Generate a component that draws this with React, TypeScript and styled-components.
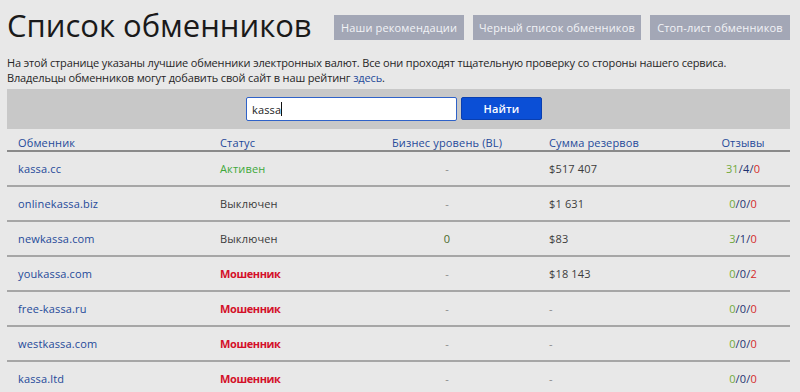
import React from "react";
import styled, { createGlobalStyle, css } from "styled-components";

const Global = createGlobalStyle`
  html, body { margin: 0; padding: 0; background: #e8e8e8; }
  body { font-family: "Open Sans", "Noto Sans", sans-serif; color: #333; }
  * { box-sizing: border-box; }
`;

const small = css`
  font-size: 11px;
  letter-spacing: 0.15px;
`;

const Page = styled.div`
  width: 800px;
  height: 392px;
  overflow: hidden;
  padding: 0 10px 0 7px;
  background: #e8e8e8;
`;

const TopBar = styled.div`
  display: flex;
  align-items: center;
  height: 55px;
`;

const Title = styled.h1`
  align-self: flex-start;
  margin: 9px 0 0 0;
  font-size: 31px;
  letter-spacing: 0;
  line-height: 32px;
  font-weight: 400;
  color: #1a1a1a;
  flex: 1;
`;

const NavButtons = styled.div`
  display: flex;
  gap: 9px;
`;

const NavButton = styled.button<{ $w: number }>`
  ${small};
  width: ${(p) => p.$w}px;
  height: 25px;
  border: none;
  background: #a3a7b6;
  color: #f2f3f6;
  font-family: inherit;
  padding: 0;
`;

const Intro = styled.p`
  ${small};
  letter-spacing: -0.15px;
  margin: 0;
  line-height: 15px;
  color: #262626;
`;

const Link = styled.a`
  color: #1f4a9a;
  text-decoration: none;
`;

const SearchBand = styled.div`
  margin-top: 4px;
  height: 40px;
  background: #c8c8c8;
  display: flex;
  align-items: center;
  justify-content: center;
  gap: 4px;
  padding-right: 9px;
`;

const SearchInput = styled.div`
  ${small};
  width: 211px;
  height: 24px;
  background: #fff;
  border: 1px solid #2f62c8;
  border-radius: 2px;
  padding-left: 5px;
  color: #222;
  display: flex;
  align-items: center;
`;

const Caret = styled.span`
  display: inline-block;
  width: 1px;
  height: 14px;
  background: #111;
`;

const FindButton = styled.button`
  ${small};
  width: 81px;
  height: 23px;
  margin-top: -1px;
  border: 1px solid #0a3fb0;
  border-radius: 2px;
  background: #0b4fd6;
  color: #fff;
  font-family: inherit;
  font-weight: 600;
  padding: 0;
`;

const Table = styled.div`
  display: grid;
  grid-template-columns: 213px 125px 204px 147px 94px;
`;

const Row = styled.div`
  display: contents;
`;

const Cell = styled.div<{ $head?: boolean; $center?: boolean; $first?: boolean }>`
  ${small};
  height: ${(p) => (p.$head ? 23 : 35)}px;
  padding-top: ${(p) => (p.$head ? 6 : 0)}px;
  padding-left: ${(p) => (p.$first ? 11 : 0)}px;
  display: flex;
  align-items: ${(p) => (p.$head ? "flex-start" : "center")};
  justify-content: ${(p) => (p.$center ? "center" : "flex-start")};
  border-bottom: 2px solid ${(p) => (p.$head ? "#8a8a8a" : "#a6a6a6")};
  line-height: 16px;
  color: ${(p) => (p.$head ? "#1f4a9a" : "#3c3c3c")};
  white-space: nowrap;
`;

const Name = styled.span`
  color: #1f4a9a;
`;

const Status = styled.span<{ $kind: "active" | "off" | "fraud" }>`
  color: ${(p) =>
    p.$kind === "active" ? "#3ea83a" : p.$kind === "fraud" ? "#d4102a" : "#3a3a3a"};
  font-weight: ${(p) => (p.$kind === "fraud" ? 700 : 400)};
  letter-spacing: ${(p) => (p.$kind === "fraud" ? "-0.4px" : "0.15px")};
`;

const Muted = styled.span`
  color: #8a8a8a;
`;

const Level = styled.span`
  color: #4a6a2a;
`;

const Plus = styled.span`
  color: #72a83c;
`;
const Mid = styled.span`
  color: #1f3370;
`;
const Minus = styled.span`
  color: #d42a2a;
`;

type Rec = {
  name: string;
  status: "active" | "off" | "fraud";
  bl: string;
  reserve: string;
  rev: [string, string, string];
};

const data: Rec[] = [
  { name: "kassa.cc", status: "active", bl: "-", reserve: "$517 407", rev: ["31", "4", "0"] },
  { name: "onlinekassa.biz", status: "off", bl: "-", reserve: "$1 631", rev: ["0", "0", "0"] },
  { name: "newkassa.com", status: "off", bl: "0", reserve: "$83", rev: ["3", "1", "0"] },
  { name: "youkassa.com", status: "fraud", bl: "-", reserve: "$18 143", rev: ["0", "0", "2"] },
  { name: "free-kassa.ru", status: "fraud", bl: "-", reserve: "-", rev: ["0", "0", "0"] },
  { name: "westkassa.com", status: "fraud", bl: "-", reserve: "-", rev: ["0", "0", "0"] },
  { name: "kassa.ltd", status: "fraud", bl: "-", reserve: "-", rev: ["0", "0", "0"] },
];

const statusText = { active: "Активен", off: "Выключен", fraud: "Мошенник" };

export default function App() {
  return (
    <Page>
      <Global />
      <TopBar>
        <Title>Список обменников</Title>
        <NavButtons>
          <NavButton $w={130}>Наши рекомендации</NavButton>
          <NavButton $w={168}>Черный список обменников</NavButton>
          <NavButton $w={140}>Стоп-лист обменников</NavButton>
        </NavButtons>
      </TopBar>
      <Intro>
        На этой странице указаны лучшие обменники электронных валют. Все они проходят тщательную
        проверку со стороны нашего сервиса.
        <br />
        Владельцы обменников могут добавить свой сайт в наш рейтинг <Link href="#">здесь</Link>.
      </Intro>
      <SearchBand>
        <SearchInput>
          kassa<Caret />
        </SearchInput>
        <FindButton>Найти</FindButton>
      </SearchBand>
      <Table>
        <Row>
          <Cell $head $first>Обменник</Cell>
          <Cell $head>Статус</Cell>
          <Cell $head $center>Бизнес уровень (BL)</Cell>
          <Cell $head>Сумма резервов</Cell>
          <Cell $head $center>Отзывы</Cell>
        </Row>
        {data.map((r) => (
          <Row key={r.name}>
            <Cell $first>
              <Name>{r.name}</Name>
            </Cell>
            <Cell>
              <Status $kind={r.status}>{statusText[r.status]}</Status>
            </Cell>
            <Cell $center>{r.bl === "-" ? <Muted>-</Muted> : <Level>{r.bl}</Level>}</Cell>
            <Cell>{r.reserve === "-" ? <Muted>-</Muted> : r.reserve}</Cell>
            <Cell $center>
              <Plus>{r.rev[0]}</Plus>
              <Mid>/{r.rev[1]}/</Mid>
              <Minus>{r.rev[2]}</Minus>
            </Cell>
          </Row>
        ))}
      </Table>
    </Page>
  );
}
